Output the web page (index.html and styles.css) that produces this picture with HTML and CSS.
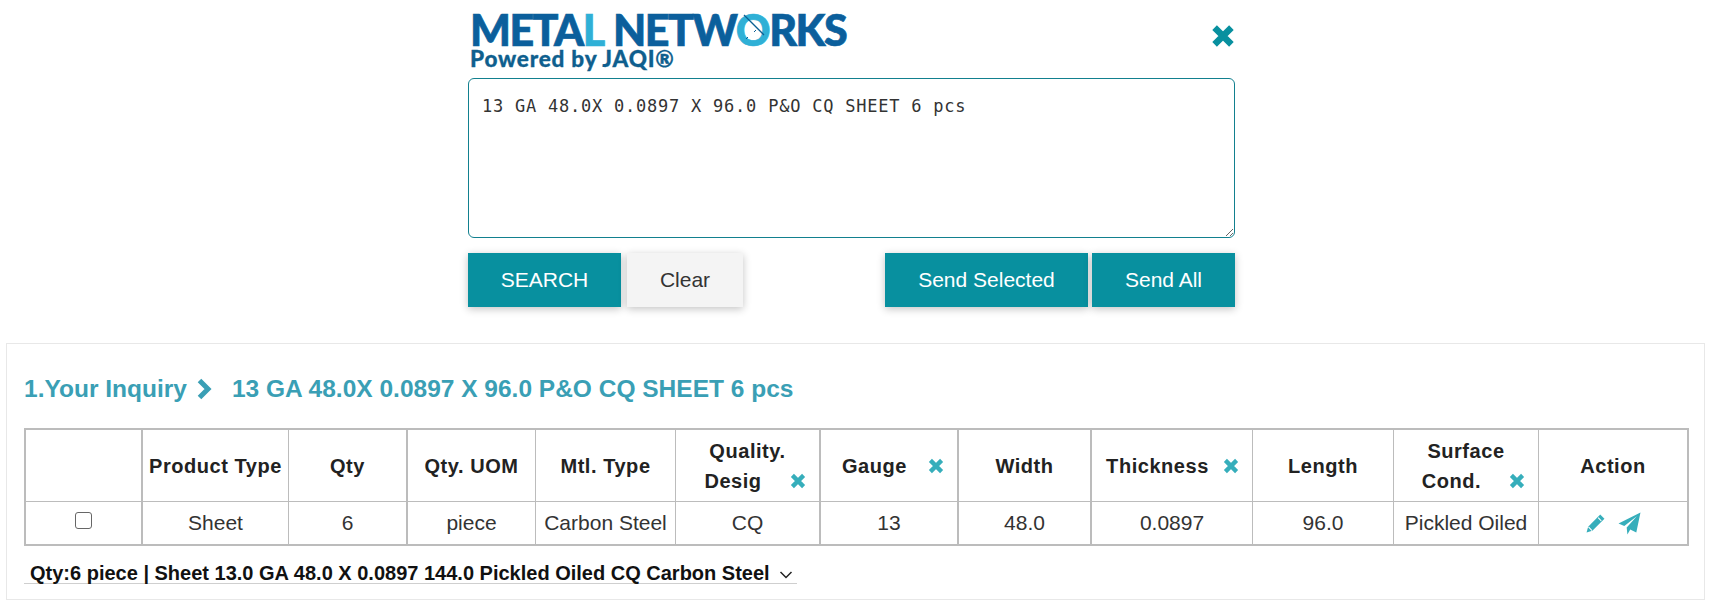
FILE: index.html
```html
<!DOCTYPE html>
<html lang="en">
<head>
<meta charset="utf-8">
<title>Metal Networks</title>
<link rel="stylesheet" href="styles.css">
</head>
<body>
<section class="search">
  <div class="brand-row">
    <div class="brand">
      <div class="brand-name">META<span class="light">L</span> NETW<span class="ring">O<svg class="ring-slash" viewBox="0 0 30 30"><path d="M5 5 25 25" fill="none" stroke="#0b5f93" stroke-width="1.300"/><path d="M9 27l-2 2M17 20l-2 2" fill="none" stroke="#0b5f93" stroke-width="1"/></svg></span>RKS</div>
      <div class="brand-sub">Powered by JAQI®</div>
    </div>
    <svg class="close" viewBox="0 0 20 20"><path d="M3 3 17 17M17 3 3 17" fill="none" stroke="#08909f" stroke-width="5.400"/></svg>
  </div>
  <textarea class="query">13 GA 48.0X 0.0897 X 96.0 P&amp;O CQ SHEET 6 pcs</textarea>
  <div class="buttons">
    <button class="btn primary search-btn">SEARCH</button>
    <button class="btn clear-btn">Clear</button>
    <button class="btn primary selected-btn">Send Selected</button>
    <button class="btn primary all-btn">Send All</button>
  </div>
</section>

<section class="card">
  <h2 class="inquiry">
    <span>1.Your Inquiry</span>
    <svg class="chev" viewBox="0 0 16 22"><path d="M3.500 2.500 12 11 3.500 19.500" fill="none" stroke="#3a9fb5" stroke-width="5"/></svg>
    <span>13 GA 48.0X 0.0897 X 96.0 P&amp;O CQ SHEET 6 pcs</span>
  </h2>
  <table class="results">
    <colgroup>
      <col class="c1"><col class="c2"><col class="c3"><col class="c4"><col class="c5"><col class="c6"><col class="c7"><col class="c8"><col class="c9"><col class="c10"><col class="c11"><col class="c12">
    </colgroup>
    <thead>
      <tr>
        <th class="thick"></th>
        <th>Product Type</th>
        <th class="thick">Qty</th>
        <th>Qty. UOM</th>
        <th>Mtl. Type</th>
        <th class="thick"><div class="first-line">Quality.</div><div class="with-x"><span>Desig</span><svg class="x" viewBox="0 0 20 20"><path d="M3 3 17 17M17 3 3 17" fill="none" stroke="#36aebb" stroke-width="5.400"/></svg></div></th>
        <th class="thick"><div class="with-x"><span>Gauge</span><svg class="x" viewBox="0 0 20 20"><path d="M3 3 17 17M17 3 3 17" fill="none" stroke="#36aebb" stroke-width="5.400"/></svg></div></th>
        <th class="thick">Width</th>
        <th><div class="with-x"><span>Thickness</span><svg class="x" viewBox="0 0 20 20"><path d="M3 3 17 17M17 3 3 17" fill="none" stroke="#36aebb" stroke-width="5.400"/></svg></div></th>
        <th>Length</th>
        <th><div class="first-line">Surface</div><div class="with-x"><span>Cond.</span><svg class="x" viewBox="0 0 20 20"><path d="M3 3 17 17M17 3 3 17" fill="none" stroke="#36aebb" stroke-width="5.400"/></svg></div></th>
        <th class="last">Action</th>
      </tr>
    </thead>
    <tbody>
      <tr>
        <td class="thick"><span class="check"></span></td>
        <td>Sheet</td>
        <td class="thick">6</td>
        <td>piece</td>
        <td>Carbon Steel</td>
        <td class="thick">CQ</td>
        <td class="thick">13</td>
        <td class="thick">48.0</td>
        <td>0.0897</td>
        <td>96.0</td>
        <td>Pickled Oiled</td>
        <td class="last">
          <span class="actions">
            <svg class="pencil" viewBox="0 0 20 20"><path d="M14.500 1.500 18.500 5.500 7 17 1.500 18.500 3 13Z" fill="#36aebb"/><path d="M12.500 4.500 15.500 7.500M3.300 13.300 6.700 16.700" stroke="#fff" stroke-width="1"/></svg>
            <svg class="plane" viewBox="0 0 22 22"><path d="M21.500 .5 17.500 19.500 11.700 16.800 9 21.500 8.300 14.900 18 4 6 13.500 .5 11Z" fill="#36aebb"/></svg>
          </span>
        </td>
      </tr>
    </tbody>
  </table>
  <div class="summary">
    <span>Qty:6 piece | Sheet 13.0 GA 48.0 X 0.0897 144.0 Pickled Oiled CQ Carbon Steel</span>
    <svg class="down" viewBox="0 0 14 10"><path d="M1.500 2 7 7.500 12.500 2" fill="none" stroke="#222" stroke-width="1.500"/></svg>
  </div>
</section>
</body>
</html>
```
FILE: styles.css
```css
* { box-sizing: border-box; }
html, body { margin: 0; padding: 0; background: #fff; }
body {
  width: 1714px;
  height: 614px;
  overflow: hidden;
  font-family: "Liberation Sans", Arial, sans-serif;
  color: #333;
}

/* top search panel */
.search { width: 767px; margin-left: 468px; }
.brand-row {
  display: flex;
  justify-content: space-between;
  align-items: flex-start;
  height: 78px;
}
.brand { padding: 9px 0 0 2px; }
.brand-name {
  font-family: Lato, "Liberation Sans", sans-serif;
  font-weight: 900;
  font-size: 43px;
  line-height: 42px;
  letter-spacing: -1.500px;
  word-spacing: 2px;
  -webkit-text-stroke: .7px currentColor;
  color: #0b5f9c;
  white-space: nowrap;
}
.light { color: #2fb0d6; }
.ring { position: relative; color: #2fb0d6; }
.ring-slash { position: absolute; left: 3px; top: 6px; width: 30px; height: 30px; }
.brand-sub {
  font-family: Lato, "Liberation Sans", sans-serif;
  font-weight: 900;
  font-size: 22.500px;
  line-height: 20px;
  margin-top: -2px;
  color: #0f5f8e;
  letter-spacing: .8px;
  -webkit-text-stroke: .3px currentColor;
}
.close { width: 24px; height: 24px; margin: 24px 0 0 0; }
.query {
  display: block;
  width: 767px;
  height: 160px;
  padding: 17px 13px;
  border: 1px solid #12808f;
  border-radius: 6px;
  outline: none;
  font-family: "DejaVu Sans Mono", monospace;
  font-size: 17px;
  letter-spacing: .77px;
  line-height: 20px;
  color: #333;
  background: #fff;
}
.buttons { display: flex; margin-top: 15px; }
.btn {
  height: 54px;
  border: 0;
  padding: 0;
  font-family: "Liberation Sans", Arial, sans-serif;
  font-size: 21px;
  box-shadow: 0 2px 8px rgba(0, 0, 0, .24);
}
.primary { background: #08909f; color: #fff; }
.search-btn { width: 153px; }
.clear-btn { width: 116px; margin-left: 6px; background: #f4f4f4; color: #333; }
.selected-btn { width: 203px; margin-left: auto; }
.all-btn { width: 143px; margin-left: 4px; }

/* results card */
.card {
  width: 1699px;
  height: 257px;
  margin: 36px 0 0 6px;
  padding: 0 17px;
  border: 1px solid #e8e8e8;
}
.inquiry {
  display: flex;
  align-items: center;
  height: 84px;
  margin: 0;
  padding-top: 6px;
  font-size: 24.500px;
  font-weight: 700;
  color: #3a9fb5;
  white-space: nowrap;
}
.chev { width: 16px; height: 22px; margin: 0 20px 0 9px; }
.results {
  width: 1665px;
  table-layout: fixed;
  border-collapse: separate;
  border-spacing: 0;
  border: 2px solid #bcbcbc;
  font-size: 21px;
}
.c1 { width: 117px; }
.c2 { width: 146px; }
.c3 { width: 119px; }
.c4 { width: 128px; }
.c5 { width: 140px; }
.c6 { width: 145px; }
.c7 { width: 138px; }
.c8 { width: 133px; }
.c9 { width: 161px; }
.c10 { width: 141px; }
.c11 { width: 145px; }
.c12 { width: 148px; }
th, td {
  padding: 0;
  text-align: center;
  border-right: 1px solid #bcbcbc;
}
th {
  height: 72px;
  border-bottom: 1px solid #bcbcbc;
  font-size: 20px;
  font-weight: 700;
  line-height: 30px;
  letter-spacing: .55px;
  color: #222;
}
td { height: 42px; color: #333; }
.thick { border-right-width: 2px; }
.last { border-right: 0; }
.with-x {
  display: flex;
  align-items: center;
  padding-right: 13px;
}
.with-x span { flex: 1; }
.x { width: 16px; height: 16px; flex: none; }
.check {
  display: inline-block;
  width: 17px;
  height: 17px;
  margin-bottom: 7px;
  vertical-align: middle;
  border: 1px solid #666;
  border-radius: 3px;
}
.actions { display: inline-flex; align-items: center; gap: 12px; vertical-align: middle; }
.pencil { width: 21px; height: 21px; }
.plane { width: 23px; height: 23px; }
.summary {
  display: flex;
  align-items: flex-end;
  gap: 9px;
  width: 773px;
  height: 28px;
  margin-top: 10px;
  padding-left: 6px;
  border-bottom: 1px solid #cfcfcf;
  font-size: 20px;
  line-height: 20px;
  font-weight: 700;
  color: #111;
  white-space: nowrap;
}
.down { width: 14px; height: 10px; margin-bottom: 3px; }
```
